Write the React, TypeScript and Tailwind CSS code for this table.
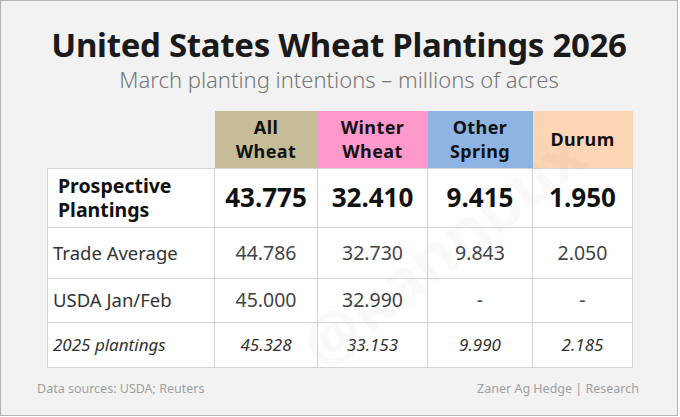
const font = { fontFamily: '"Noto Sans", "Open Sans", sans-serif' };

type Row = {
  label: string;
  values: string[];
  kind: "main" | "normal" | "italic";
  h: string;
};

const headers = [
  { lines: ["All", "Wheat"], bg: "bg-[#c4bd97]" },
  { lines: ["Winter", "Wheat"], bg: "bg-[#ff99cc]" },
  { lines: ["Other", "Spring"], bg: "bg-[#8db4e2]" },
  { lines: ["Durum"], bg: "bg-[#fcd5b4]" },
];

const rows: Row[] = [
  { label: "Prospective Plantings", values: ["43.775", "32.410", "9.415", "1.950"], kind: "main", h: "h-[59px]" },
  { label: "Trade Average", values: ["44.786", "32.730", "9.843", "2.050"], kind: "normal", h: "h-[51px]" },
  { label: "USDA Jan/Feb", values: ["45.000", "32.990", "-", "-"], kind: "normal", h: "h-[44px]" },
  { label: "2025 plantings", values: ["45.328", "33.153", "9.990", "2.185"], kind: "italic", h: "h-[45px]" },
];

function labelClass(kind: Row["kind"]) {
  if (kind === "main") return "text-[19.5px] leading-[24px] font-bold text-[#111] pl-[10px] pr-[30px]";
  if (kind === "italic") return "text-[17px] italic text-[#333] pl-[5px]";
  return "text-[18.5px] text-[#333] pl-[5px]";
}

function valueClass(kind: Row["kind"]) {
  if (kind === "main") return "text-[26px] font-bold text-[#111]";
  if (kind === "italic") return "text-[17px] italic text-[#333]";
  return "text-[19.5px] text-[#444]";
}

export default function App() {
  return (
    <div className="w-[680px] h-[417px] bg-white" style={font}>
      <div className="relative w-[678px] h-[416px] border border-[#b4b4b4] bg-[#f2f2f2] flex flex-col overflow-hidden">
        {/* Title */}
        <div className="pt-[24px] text-center">
          <h1 className="text-[33px] leading-[40px] font-bold text-[#1a1a1a] tracking-[-0.3px]">
            United States Wheat Plantings 2026
          </h1>
          <p className="text-[22px] leading-[28px] text-[#777] font-light">
            March planting intentions – millions of acres
          </p>
        </div>

        {/* Table */}
        <div className="pl-[46px] mt-[18px]">
          <table className="border-collapse table-fixed">
            <colgroup>
              <col className="w-[167px]" />
              <col className="w-[103px]" />
              <col className="w-[110px]" />
              <col className="w-[105px]" />
              <col className="w-[100px]" />
            </colgroup>
            <thead>
              <tr className="h-[57px]">
                <th className="p-0" />
                {headers.map((h) => (
                  <th
                    key={h.lines.join(" ")}
                    className={`${h.bg} p-0 text-center text-[18px] leading-[24px] font-bold text-[#111] tracking-[0.4px]`}
                  >
                    {h.lines.map((l) => (
                      <div key={l}>{l}</div>
                    ))}
                  </th>
                ))}
              </tr>
            </thead>
            <tbody>
              {rows.map((r) => (
                <tr key={r.label} className={r.h}>
                  <td className={`border border-[#d4d4d4] bg-white p-0 text-left ${labelClass(r.kind)}`}>
                    {r.label}
                  </td>
                  {r.values.map((v, i) => (
                    <td
                      key={i}
                      className={`border border-[#d4d4d4] bg-white p-0 text-center ${valueClass(r.kind)}`}
                    >
                      {v}
                    </td>
                  ))}
                </tr>
              ))}
            </tbody>
          </table>
        </div>

        {/* Footer */}
        <div className="flex justify-between pl-[36px] pr-[38px] mt-[11px] text-[12.5px] leading-[20px] text-[#a0a0a0]">
          <span>Data sources: USDA; Reuters</span>
          <span>Zaner Ag Hedge | Research</span>
        </div>

        {/* Watermark */}
        <div className="absolute left-[272px] top-[200px] -rotate-[38deg] text-[64px] font-bold text-black/[0.025] pointer-events-none select-none whitespace-nowrap">
          @kannbux
        </div>
      </div>
    </div>
  );
}
